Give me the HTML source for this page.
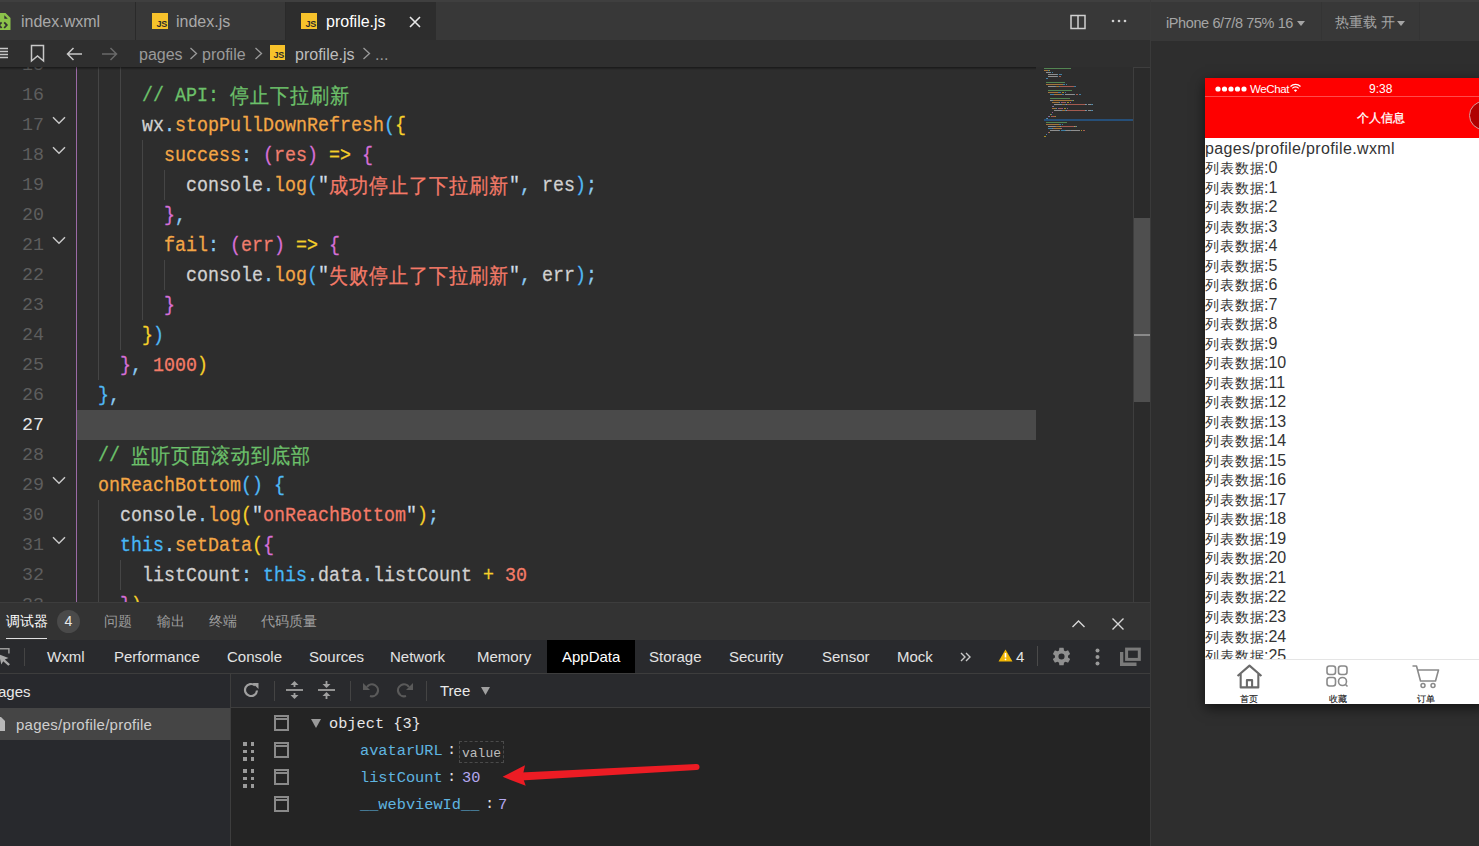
<!DOCTYPE html>
<html><head><meta charset="utf-8">
<style>
*{margin:0;padding:0;box-sizing:border-box}
html,body{width:1479px;height:846px;overflow:hidden;background:#2e2e2e;font-family:"Liberation Sans",sans-serif}
.a{position:absolute}
svg{position:absolute;overflow:visible}
/* editor tabs */
#tabbar{left:0;top:0;width:1150px;height:40px;background:#383838;border-top:2px solid #3f3f3f}
.tab{position:absolute;top:0;height:38px;white-space:nowrap}
.tab .t{position:absolute;top:10px;font-size:16px;line-height:20px;color:#a9a9a9}
.tabsep{position:absolute;top:0;width:1px;height:38px;background:#2a2a2a}
.js{position:absolute;width:15px;height:14px;background:#f7c22b}
.js i{position:absolute;right:1px;bottom:0px;font-style:normal;font-size:9px;line-height:9px;color:#2a2a2a;font-weight:bold;letter-spacing:-0.3px}
#crumbs{left:0;top:40px;width:1150px;height:27px;background:#2f2f2f;z-index:3}
#crumbs:after{content:"";position:absolute;left:0;top:27px;width:1036px;height:3px;background:linear-gradient(rgba(0,0,0,.45),rgba(0,0,0,0))}
.cr{position:absolute;top:5px;font-size:16px;line-height:20px;color:#9a9a9a;white-space:nowrap}
/* code */
#code{left:0;top:67px;width:1150px;height:536px;background:#2d2d2d;overflow:hidden}
.ln{position:absolute;left:0;width:44px;height:30px;line-height:32px;text-align:right;font-family:"Liberation Mono",monospace;font-size:18.33px;color:#5e5e5e}
.ln.cur{color:#e6e6e6}
.cl{position:absolute;height:30px;line-height:30px;white-space:pre;font-family:"Liberation Mono",monospace;font-size:18.33px;transform:translateY(1.5px) scaleY(1.1);-webkit-text-stroke:0.25px currentColor}
.cj{display:inline-block;width:20px;font-size:19px;text-align:left;line-height:30px;vertical-align:top;font-family:"Liberation Sans",sans-serif}
.ig{position:absolute;width:1px}

#curline{left:77px;top:343px;width:959px;height:30px;background:#4a4a4a}
#minimap{left:1036px;top:0;width:97px;height:536px}
#minimap i{position:absolute;height:1.5px;opacity:.6}
#vsb{left:1133px;top:0;width:17px;height:536px;background:#2b2b2b;border-left:1px solid #3e3e3e;border-top:1px solid #3e3e3e}
/* bottom panel */
#panel{left:0;top:602px;width:1150px;height:244px;background:#242424}
#phead{left:0;top:0;width:1150px;height:38px;background:#333333;border-top:1px solid #3d3d3d}
.ph{position:absolute;top:9px;font-size:14px;line-height:18px;color:#9d9d9d;white-space:nowrap}
#dtabs{left:0;top:38px;width:1150px;height:34px;background:#292a2d;border-bottom:1px solid #3d3d3d}
.dt{position:absolute;top:8px;font-size:15px;line-height:18px;color:#e3e3e3;white-space:nowrap}
#left{left:0;top:72px;width:231px;height:172px;background:#28292d;border-right:1px solid #3d3d3d}
#rtool{left:231px;top:72px;width:919px;height:34px;background:#292a2d;border-bottom:1px solid #3d3d3d}
.mono{font-family:"Liberation Mono",monospace}
.tr{position:absolute;font-family:"Liberation Mono",monospace;font-size:15.3px;line-height:18px;white-space:pre}
.sq{position:absolute;left:274px;width:15px;height:16px;border:2.5px solid #8a8a8a}
.sq:after{content:"";position:absolute;left:0;right:0;top:1px;height:2px;background:#8a8a8a}
.drag{position:absolute;left:243px;width:11px;height:18px}
.drag i{position:absolute;width:3.5px;height:3.5px;background:#9a9a9a}
/* simulator */
#sim{left:1150px;top:0;width:329px;height:846px;background:#2e2e2e;border-left:1px solid #3a3a3a}
#simbar{left:0;top:0;width:329px;height:41px;background:#383838;border-top:2px solid #3f3f3f}
.sb{position:absolute;top:12px;font-size:14.5px;line-height:18px;color:#a5a5a5;white-space:nowrap;letter-spacing:-0.4px}
.tri{position:absolute;width:0;height:0;border-left:4px solid transparent;border-right:4px solid transparent;border-top:5px solid #a5a5a5}
#phone{left:54px;top:78px;width:280px;height:626px;background:#fff;box-shadow:0 4px 12px rgba(0,0,0,.6);overflow:hidden}
#status{left:0;top:0;width:280px;height:19px;background:#fe0000;border-bottom:1px solid #ff4a4a}
#nav{left:0;top:19px;width:280px;height:41px;background:#fe0000}
.li{position:absolute;left:0;font-size:14px;line-height:19px;color:#333;white-space:nowrap;letter-spacing:1px}
.li b{font-weight:normal;font-size:16px;letter-spacing:0;margin-left:-1px}
#tabb{left:0;top:581px;width:280px;height:45px;background:#fff;border-top:1px solid #e5e5e5}
.tbt{position:absolute;top:33px;font-size:9px;-webkit-text-stroke:0.1px #111;line-height:12px;color:#111;white-space:nowrap}
</style></head><body>

<!-- ============ EDITOR TAB BAR ============ -->
<div id="tabbar" class="a">
  <div class="tab" style="left:0;width:135px">
    <svg style="left:-4.5px;top:10.5px" width="15" height="17" viewBox="0 0 15 17"><path d="M0 0H9.5L14.5 5V17H0z" fill="#8bc34a"/><path d="M8.3 2.2L11.8 5.7H8.3z" fill="#333"/><path d="M5.6 9.3L3 12.1L5.6 15M8.2 9.3L10.8 12.1L8.2 15" fill="none" stroke="#333" stroke-width="1.8"/></svg>
    <div class="t" style="left:21px">index.wxml</div>
  </div>
  <div class="tabsep" style="left:135px"></div>
  <div class="tab" style="left:136px;width:149px">
    <div class="js" style="left:16px;top:11px;width:16px;height:16px"><i>JS</i></div>
    <div class="t" style="left:40px">index.js</div>
  </div>
  <div class="tabsep" style="left:285px"></div>
  <div class="tab" style="left:286px;width:150px;background:#2d2d2d">
    <div class="js" style="left:15px;top:11px;width:16px;height:16px"><i>JS</i></div>
    <div class="t" style="left:40px;color:#ffffff">profile.js</div>
    <svg style="left:123px;top:14px" width="12" height="12" viewBox="0 0 12 12"><path d="M1 1L11 11M11 1L1 11" stroke="#e8e8e8" stroke-width="1.6"/></svg>
  </div>
  <!-- split + more -->
  <svg style="left:1070px;top:12px" width="16" height="16" viewBox="0 0 16 16"><rect x="1" y="1.5" width="14" height="13" fill="none" stroke="#cfcfcf" stroke-width="1.5"/><path d="M8 1.5v13" stroke="#cfcfcf" stroke-width="1.5"/></svg>
  <svg style="left:1111px;top:17px" width="16" height="4" viewBox="0 0 16 4"><circle cx="2" cy="2" r="1.3" fill="#cfcfcf"/><circle cx="8" cy="2" r="1.3" fill="#cfcfcf"/><circle cx="14" cy="2" r="1.3" fill="#cfcfcf"/></svg>
</div>

<!-- ============ BREADCRUMBS ============ -->
<div id="crumbs" class="a">
  <svg style="left:-3px;top:7px" width="12" height="12" viewBox="0 0 12 12"><path d="M0 1.5h11M0 4.5h11M0 7.5h11M0 10.5h11" stroke="#c8c8c8" stroke-width="1.3"/></svg>
  <svg style="left:30px;top:4px" width="15" height="19" viewBox="0 0 15 19"><path d="M1.5 1.5h12v15.5l-6-5-6 5z" fill="none" stroke="#c8c8c8" stroke-width="1.5"/></svg>
  <svg style="left:66px;top:7px" width="17" height="14" viewBox="0 0 17 14"><path d="M16 7H1.5M7.5 1L1.5 7l6 6" fill="none" stroke="#c8c8c8" stroke-width="1.5"/></svg>
  <svg style="left:101px;top:7px" width="17" height="14" viewBox="0 0 17 14"><path d="M1 7h14.5M9.5 1l6 6-6 6" fill="none" stroke="#6a6a6a" stroke-width="1.5"/></svg>
  <div class="cr" style="left:139px">pages</div>
  <svg style="left:189px;top:7px" width="9" height="13" viewBox="0 0 9 13"><path d="M1.5 1l6 5.5-6 5.5" fill="none" stroke="#9a9a9a" stroke-width="1.3"/></svg>
  <div class="cr" style="left:202px">profile</div>
  <svg style="left:254px;top:7px" width="9" height="13" viewBox="0 0 9 13"><path d="M1.5 1l6 5.5-6 5.5" fill="none" stroke="#9a9a9a" stroke-width="1.3"/></svg>
  <div class="js" style="left:270px;top:5px;width:15px;height:15px"><i>JS</i></div>
  <div class="cr" style="left:295px;color:#bdbdbd">profile.js</div>
  <svg style="left:362px;top:7px" width="9" height="13" viewBox="0 0 9 13"><path d="M1.5 1l6 5.5-6 5.5" fill="none" stroke="#9a9a9a" stroke-width="1.3"/></svg>
  <div class="cr" style="left:375px">...</div>
</div>

<!-- ============ CODE ============ -->
<div id="code" class="a">
  <div id="curline" class="a"></div>
<div class="ig" style="left:76px;top:-47px;height:630px;background:#9b6aa6"></div>
<div class="ig" style="left:98px;top:-47px;height:360px;background:#454545"></div>
<div class="ig" style="left:120px;top:-47px;height:330px;background:#454545"></div>
<div class="ig" style="left:142px;top:73px;height:180px;background:#454545"></div>
<div class="ig" style="left:164px;top:103px;height:30px;background:#454545"></div>
<div class="ig" style="left:164px;top:193px;height:30px;background:#454545"></div>
<div class="ig" style="left:98px;top:433px;height:150px;background:#454545"></div>
<div class="ig" style="left:120px;top:493px;height:30px;background:#454545"></div>
<div class="ln" style="top:-17px">15</div>
<div class="cl" style="top:-17px;left:120px"></div>
<div class="ln" style="top:13px">16</div>
<div class="cl" style="top:13px;left:142px"><span style="color:#6cc06a">// API: </span><span class="cj" style="color:#6cc06a">停</span><span class="cj" style="color:#6cc06a">止</span><span class="cj" style="color:#6cc06a">下</span><span class="cj" style="color:#6cc06a">拉</span><span class="cj" style="color:#6cc06a">刷</span><span class="cj" style="color:#6cc06a">新</span></div>
<div class="ln" style="top:43px">17</div>
<svg class="fold" style="left:52px;top:49px" width="14" height="9" viewBox="0 0 14 9"><path d="M1 1.2l6 6 6-6" fill="none" stroke="#c8c8c8" stroke-width="1.5"/></svg>
<div class="cl" style="top:43px;left:142px"><span style="color:#d1d1d1">wx</span><span style="color:#8ccbf2">.</span><span style="color:#f3a646">stopPullDownRefresh</span><span style="color:#4fb8f5">(</span><span style="color:#f5d02a">{</span></div>
<div class="ln" style="top:73px">18</div>
<svg class="fold" style="left:52px;top:79px" width="14" height="9" viewBox="0 0 14 9"><path d="M1 1.2l6 6 6-6" fill="none" stroke="#c8c8c8" stroke-width="1.5"/></svg>
<div class="cl" style="top:73px;left:164px"><span style="color:#f3a646">success</span><span style="color:#8ccbf2">:</span><span style="color:#d1d1d1"> </span><span style="color:#d66fd6">(</span><span style="color:#f07e6e">res</span><span style="color:#d66fd6">)</span><span style="color:#d1d1d1"> </span><span style="color:#f5d02a">=&gt;</span><span style="color:#d1d1d1"> </span><span style="color:#d66fd6">{</span></div>
<div class="ln" style="top:103px">19</div>
<div class="cl" style="top:103px;left:186px"><span style="color:#d1d1d1">console</span><span style="color:#8ccbf2">.</span><span style="color:#f3a646">log</span><span style="color:#4fb8f5">(</span><span style="color:#cfdbe6">&quot;</span><span class="cj" style="color:#f47a68">成</span><span class="cj" style="color:#f47a68">功</span><span class="cj" style="color:#f47a68">停</span><span class="cj" style="color:#f47a68">止</span><span class="cj" style="color:#f47a68">了</span><span class="cj" style="color:#f47a68">下</span><span class="cj" style="color:#f47a68">拉</span><span class="cj" style="color:#f47a68">刷</span><span class="cj" style="color:#f47a68">新</span><span style="color:#cfdbe6">&quot;</span><span style="color:#8ccbf2">, </span><span style="color:#d1d1d1">res</span><span style="color:#4fb8f5">)</span><span style="color:#8ccbf2">;</span></div>
<div class="ln" style="top:133px">20</div>
<div class="cl" style="top:133px;left:164px"><span style="color:#d66fd6">}</span><span style="color:#8ccbf2">,</span></div>
<div class="ln" style="top:163px">21</div>
<svg class="fold" style="left:52px;top:169px" width="14" height="9" viewBox="0 0 14 9"><path d="M1 1.2l6 6 6-6" fill="none" stroke="#c8c8c8" stroke-width="1.5"/></svg>
<div class="cl" style="top:163px;left:164px"><span style="color:#f3a646">fail</span><span style="color:#8ccbf2">:</span><span style="color:#d1d1d1"> </span><span style="color:#d66fd6">(</span><span style="color:#f07e6e">err</span><span style="color:#d66fd6">)</span><span style="color:#d1d1d1"> </span><span style="color:#f5d02a">=&gt;</span><span style="color:#d1d1d1"> </span><span style="color:#d66fd6">{</span></div>
<div class="ln" style="top:193px">22</div>
<div class="cl" style="top:193px;left:186px"><span style="color:#d1d1d1">console</span><span style="color:#8ccbf2">.</span><span style="color:#f3a646">log</span><span style="color:#4fb8f5">(</span><span style="color:#cfdbe6">&quot;</span><span class="cj" style="color:#f47a68">失</span><span class="cj" style="color:#f47a68">败</span><span class="cj" style="color:#f47a68">停</span><span class="cj" style="color:#f47a68">止</span><span class="cj" style="color:#f47a68">了</span><span class="cj" style="color:#f47a68">下</span><span class="cj" style="color:#f47a68">拉</span><span class="cj" style="color:#f47a68">刷</span><span class="cj" style="color:#f47a68">新</span><span style="color:#cfdbe6">&quot;</span><span style="color:#8ccbf2">, </span><span style="color:#d1d1d1">err</span><span style="color:#4fb8f5">)</span><span style="color:#8ccbf2">;</span></div>
<div class="ln" style="top:223px">23</div>
<div class="cl" style="top:223px;left:164px"><span style="color:#d66fd6">}</span></div>
<div class="ln" style="top:253px">24</div>
<div class="cl" style="top:253px;left:142px"><span style="color:#f5d02a">}</span><span style="color:#4fb8f5">)</span></div>
<div class="ln" style="top:283px">25</div>
<div class="cl" style="top:283px;left:120px"><span style="color:#d66fd6">}</span><span style="color:#8ccbf2">, </span><span style="color:#f47c68">1000</span><span style="color:#f5d02a">)</span></div>
<div class="ln" style="top:313px">26</div>
<div class="cl" style="top:313px;left:98px"><span style="color:#4fb8f5">}</span><span style="color:#8ccbf2">,</span></div>
<div class="ln cur" style="top:343px">27</div>
<div class="cl" style="top:343px;left:76px"></div>
<div class="ln" style="top:373px">28</div>
<div class="cl" style="top:373px;left:98px"><span style="color:#6cc06a">// </span><span class="cj" style="color:#6cc06a">监</span><span class="cj" style="color:#6cc06a">听</span><span class="cj" style="color:#6cc06a">页</span><span class="cj" style="color:#6cc06a">面</span><span class="cj" style="color:#6cc06a">滚</span><span class="cj" style="color:#6cc06a">动</span><span class="cj" style="color:#6cc06a">到</span><span class="cj" style="color:#6cc06a">底</span><span class="cj" style="color:#6cc06a">部</span></div>
<div class="ln" style="top:403px">29</div>
<svg class="fold" style="left:52px;top:409px" width="14" height="9" viewBox="0 0 14 9"><path d="M1 1.2l6 6 6-6" fill="none" stroke="#c8c8c8" stroke-width="1.5"/></svg>
<div class="cl" style="top:403px;left:98px"><span style="color:#f3a646">onReachBottom</span><span style="color:#4fb8f5">()</span><span style="color:#d1d1d1"> </span><span style="color:#4fb8f5">{</span></div>
<div class="ln" style="top:433px">30</div>
<div class="cl" style="top:433px;left:120px"><span style="color:#d1d1d1">console</span><span style="color:#8ccbf2">.</span><span style="color:#f3a646">log</span><span style="color:#f5d02a">(</span><span style="color:#cfdbe6">&quot;</span><span style="color:#f47a68">onReachBottom</span><span style="color:#cfdbe6">&quot;</span><span style="color:#f5d02a">)</span><span style="color:#8ccbf2">;</span></div>
<div class="ln" style="top:463px">31</div>
<svg class="fold" style="left:52px;top:469px" width="14" height="9" viewBox="0 0 14 9"><path d="M1 1.2l6 6 6-6" fill="none" stroke="#c8c8c8" stroke-width="1.5"/></svg>
<div class="cl" style="top:463px;left:120px"><span style="color:#47b6f5">this</span><span style="color:#8ccbf2">.</span><span style="color:#f3a646">setData</span><span style="color:#f5d02a">(</span><span style="color:#d66fd6">{</span></div>
<div class="ln" style="top:493px">32</div>
<div class="cl" style="top:493px;left:142px"><span style="color:#d1d1d1">listCount</span><span style="color:#8ccbf2">:</span><span style="color:#d1d1d1"> </span><span style="color:#47b6f5">this</span><span style="color:#8ccbf2">.</span><span style="color:#d1d1d1">data</span><span style="color:#8ccbf2">.</span><span style="color:#d1d1d1">listCount</span><span style="color:#d1d1d1"> </span><span style="color:#f5d02a">+</span><span style="color:#d1d1d1"> </span><span style="color:#f47c68">30</span></div>
<div class="ln" style="top:523px">33</div>
<div class="cl" style="top:523px;left:120px"><span style="color:#d66fd6">}</span><span style="color:#f5d02a">)</span></div>
  <div id="minimap" class="a"><div class="a" style="left:8px;top:52.0px;width:89px;height:2px;background:#264f78"></div><i style="left:8px;top:0.5px;width:27px;background:#6cc06a"></i><i style="left:8px;top:2.5px;width:4px;background:#f3a646"></i><i style="left:12px;top:2.5px;width:1px;background:#4fb8f5"></i><i style="left:13px;top:2.5px;width:1px;background:#f5d02a"></i><i style="left:10px;top:4.5px;width:4px;background:#d1d1d1"></i><i style="left:14px;top:4.5px;width:1px;background:#8ccbf2"></i><i style="left:16px;top:4.5px;width:1px;background:#4fb8f5"></i><i style="left:12px;top:6.5px;width:9px;background:#d1d1d1"></i><i style="left:21px;top:6.5px;width:1px;background:#8ccbf2"></i><i style="left:23px;top:6.5px;width:3px;background:#4fb8f5"></i><i style="left:12px;top:8.5px;width:9px;background:#d1d1d1"></i><i style="left:21px;top:8.5px;width:1px;background:#8ccbf2"></i><i style="left:23px;top:8.5px;width:2px;background:#f47c68"></i><i style="left:10px;top:10.5px;width:2px;background:#4fb8f5"></i><i style="left:10px;top:14.5px;width:19px;background:#6cc06a"></i><i style="left:10px;top:16.5px;width:17px;background:#f3a646"></i><i style="left:27px;top:16.5px;width:2px;background:#4fb8f5"></i><i style="left:30px;top:16.5px;width:1px;background:#4fb8f5"></i><i style="left:12px;top:18.5px;width:7px;background:#d1d1d1"></i><i style="left:19px;top:18.5px;width:1px;background:#8ccbf2"></i><i style="left:20px;top:18.5px;width:3px;background:#f3a646"></i><i style="left:23px;top:18.5px;width:1px;background:#4fb8f5"></i><i style="left:24px;top:18.5px;width:14px;background:#f47a68"></i><i style="left:38px;top:18.5px;width:2px;background:#4fb8f5"></i><i style="left:12px;top:22.5px;width:24px;background:#6cc06a"></i><i style="left:12px;top:24.5px;width:10px;background:#f3a646"></i><i style="left:22px;top:24.5px;width:3px;background:#4fb8f5"></i><i style="left:26px;top:24.5px;width:2px;background:#f5d02a"></i><i style="left:29px;top:24.5px;width:1px;background:#4fb8f5"></i><i style="left:14px;top:26.5px;width:4px;background:#47b6f5"></i><i style="left:18px;top:26.5px;width:8px;background:#f3a646"></i><i style="left:26px;top:26.5px;width:2px;background:#4fb8f5"></i><i style="left:29px;top:26.5px;width:9px;background:#d1d1d1"></i><i style="left:38px;top:26.5px;width:1px;background:#8ccbf2"></i><i style="left:40px;top:26.5px;width:2px;background:#f47c68"></i><i style="left:43px;top:26.5px;width:2px;background:#4fb8f5"></i><i style="left:14px;top:30.5px;width:20px;background:#6cc06a"></i><i style="left:14px;top:32.5px;width:2px;background:#d1d1d1"></i><i style="left:16px;top:32.5px;width:1px;background:#8ccbf2"></i><i style="left:17px;top:32.5px;width:19px;background:#f3a646"></i><i style="left:36px;top:32.5px;width:1px;background:#4fb8f5"></i><i style="left:37px;top:32.5px;width:1px;background:#f5d02a"></i><i style="left:16px;top:34.5px;width:7px;background:#f3a646"></i><i style="left:23px;top:34.5px;width:1px;background:#8ccbf2"></i><i style="left:25px;top:34.5px;width:1px;background:#d66fd6"></i><i style="left:26px;top:34.5px;width:3px;background:#f07e6e"></i><i style="left:29px;top:34.5px;width:1px;background:#d66fd6"></i><i style="left:31px;top:34.5px;width:2px;background:#f5d02a"></i><i style="left:34px;top:34.5px;width:1px;background:#d66fd6"></i><i style="left:18px;top:36.5px;width:7px;background:#d1d1d1"></i><i style="left:25px;top:36.5px;width:1px;background:#8ccbf2"></i><i style="left:26px;top:36.5px;width:3px;background:#f3a646"></i><i style="left:29px;top:36.5px;width:1px;background:#4fb8f5"></i><i style="left:30px;top:36.5px;width:1px;background:#cfdbe6"></i><i style="left:31px;top:36.5px;width:18px;background:#f47a68"></i><i style="left:49px;top:36.5px;width:1px;background:#cfdbe6"></i><i style="left:50px;top:36.5px;width:1px;background:#8ccbf2"></i><i style="left:52px;top:36.5px;width:3px;background:#d1d1d1"></i><i style="left:55px;top:36.5px;width:1px;background:#4fb8f5"></i><i style="left:56px;top:36.5px;width:1px;background:#8ccbf2"></i><i style="left:16px;top:38.5px;width:1px;background:#d66fd6"></i><i style="left:17px;top:38.5px;width:1px;background:#8ccbf2"></i><i style="left:16px;top:40.5px;width:4px;background:#f3a646"></i><i style="left:20px;top:40.5px;width:1px;background:#8ccbf2"></i><i style="left:22px;top:40.5px;width:1px;background:#d66fd6"></i><i style="left:23px;top:40.5px;width:3px;background:#f07e6e"></i><i style="left:26px;top:40.5px;width:1px;background:#d66fd6"></i><i style="left:28px;top:40.5px;width:2px;background:#f5d02a"></i><i style="left:31px;top:40.5px;width:1px;background:#d66fd6"></i><i style="left:18px;top:42.5px;width:7px;background:#d1d1d1"></i><i style="left:25px;top:42.5px;width:1px;background:#8ccbf2"></i><i style="left:26px;top:42.5px;width:3px;background:#f3a646"></i><i style="left:29px;top:42.5px;width:1px;background:#4fb8f5"></i><i style="left:30px;top:42.5px;width:1px;background:#cfdbe6"></i><i style="left:31px;top:42.5px;width:18px;background:#f47a68"></i><i style="left:49px;top:42.5px;width:1px;background:#cfdbe6"></i><i style="left:50px;top:42.5px;width:1px;background:#8ccbf2"></i><i style="left:52px;top:42.5px;width:3px;background:#d1d1d1"></i><i style="left:55px;top:42.5px;width:1px;background:#4fb8f5"></i><i style="left:56px;top:42.5px;width:1px;background:#8ccbf2"></i><i style="left:16px;top:44.5px;width:1px;background:#d66fd6"></i><i style="left:14px;top:46.5px;width:1px;background:#f5d02a"></i><i style="left:15px;top:46.5px;width:1px;background:#4fb8f5"></i><i style="left:12px;top:48.5px;width:1px;background:#d66fd6"></i><i style="left:13px;top:48.5px;width:1px;background:#8ccbf2"></i><i style="left:15px;top:48.5px;width:4px;background:#f47c68"></i><i style="left:19px;top:48.5px;width:1px;background:#f5d02a"></i><i style="left:10px;top:50.5px;width:1px;background:#4fb8f5"></i><i style="left:11px;top:50.5px;width:1px;background:#8ccbf2"></i><i style="left:10px;top:54.5px;width:21px;background:#6cc06a"></i><i style="left:10px;top:56.5px;width:13px;background:#f3a646"></i><i style="left:23px;top:56.5px;width:2px;background:#4fb8f5"></i><i style="left:26px;top:56.5px;width:1px;background:#4fb8f5"></i><i style="left:12px;top:58.5px;width:7px;background:#d1d1d1"></i><i style="left:19px;top:58.5px;width:1px;background:#8ccbf2"></i><i style="left:20px;top:58.5px;width:3px;background:#f3a646"></i><i style="left:23px;top:58.5px;width:1px;background:#f5d02a"></i><i style="left:24px;top:58.5px;width:1px;background:#cfdbe6"></i><i style="left:25px;top:58.5px;width:13px;background:#f47a68"></i><i style="left:38px;top:58.5px;width:1px;background:#cfdbe6"></i><i style="left:39px;top:58.5px;width:1px;background:#f5d02a"></i><i style="left:40px;top:58.5px;width:1px;background:#8ccbf2"></i><i style="left:12px;top:60.5px;width:4px;background:#47b6f5"></i><i style="left:16px;top:60.5px;width:1px;background:#8ccbf2"></i><i style="left:17px;top:60.5px;width:7px;background:#f3a646"></i><i style="left:24px;top:60.5px;width:1px;background:#f5d02a"></i><i style="left:25px;top:60.5px;width:1px;background:#d66fd6"></i><i style="left:14px;top:62.5px;width:9px;background:#d1d1d1"></i><i style="left:23px;top:62.5px;width:1px;background:#8ccbf2"></i><i style="left:25px;top:62.5px;width:4px;background:#47b6f5"></i><i style="left:29px;top:62.5px;width:1px;background:#8ccbf2"></i><i style="left:30px;top:62.5px;width:4px;background:#d1d1d1"></i><i style="left:34px;top:62.5px;width:1px;background:#8ccbf2"></i><i style="left:35px;top:62.5px;width:9px;background:#d1d1d1"></i><i style="left:45px;top:62.5px;width:1px;background:#f5d02a"></i><i style="left:47px;top:62.5px;width:2px;background:#f47c68"></i><i style="left:12px;top:64.5px;width:1px;background:#d66fd6"></i><i style="left:13px;top:64.5px;width:1px;background:#f5d02a"></i><i style="left:10px;top:66.5px;width:1px;background:#4fb8f5"></i><i style="left:8px;top:68.5px;width:2px;background:#f5d02a"></i></div>
  <div id="vsb" class="a">
    <div class="a" style="left:0;top:150px;width:16px;height:184px;background:#4f4f4f"></div>
    <div class="a" style="left:0;top:266px;width:16px;height:2px;background:#8a8a8a"></div>
  </div>
</div>

<!-- ============ BOTTOM PANEL ============ -->
<div id="panel" class="a">
  <div id="phead" class="a">
    <div class="ph" style="left:6px;color:#ffffff">调试器</div>
    <div class="a" style="left:6px;top:34.5px;width:41px;height:1.5px;background:#e0e0e0"></div>
    <div class="a" style="left:57px;top:7px;width:23px;height:23px;border-radius:50%;background:#4a4a4a;color:#e8e8e8;font-size:14px;line-height:23px;text-align:center">4</div>
    <div class="ph" style="left:104px">问题</div>
    <div class="ph" style="left:157px">输出</div>
    <div class="ph" style="left:209px">终端</div>
    <div class="ph" style="left:261px">代码质量</div>
    <svg style="left:1072px;top:17px" width="13" height="8" viewBox="0 0 13 8"><path d="M0.5 7l6-6 6 6" fill="none" stroke="#d8d8d8" stroke-width="1.4"/></svg>
    <svg style="left:1112px;top:15px" width="12" height="12" viewBox="0 0 12 12"><path d="M0.5 0.5l11 11M11.5 0.5l-11 11" stroke="#d8d8d8" stroke-width="1.4"/></svg>
  </div>
  <div id="dtabs" class="a">
    <svg style="left:-10px;top:8px" width="22" height="18" viewBox="0 0 22 18"><path d="M0 0.8H18.9V5.5" fill="none" stroke="#9a9a9a" stroke-width="1.5"/><path d="M9 6.5L18.5 10L14.8 11.6L20 16.2L18.3 17.8L13.2 13.2L11.3 16.5z" fill="#a8a8a8"/></svg>
    <div class="a" style="left:24px;top:8px;width:1px;height:18px;background:#444"></div>
    <div class="dt" style="left:47px">Wxml</div>
    <div class="dt" style="left:114px">Performance</div>
    <div class="dt" style="left:227px">Console</div>
    <div class="dt" style="left:309px">Sources</div>
    <div class="dt" style="left:390px">Network</div>
    <div class="dt" style="left:477px">Memory</div>
    <div class="a" style="left:547px;top:0;width:88px;height:33px;background:#000"></div>
    <div class="dt" style="left:562px;color:#fff">AppData</div>
    <div class="dt" style="left:649px">Storage</div>
    <div class="dt" style="left:729px">Security</div>
    <div class="dt" style="left:822px">Sensor</div>
    <div class="dt" style="left:897px">Mock</div>
    <svg style="left:960px;top:12px" width="12" height="10" viewBox="0 0 12 10"><path d="M1 1l4 4-4 4M6 1l4 4-4 4" fill="none" stroke="#c8c8c8" stroke-width="1.4"/></svg>
    <svg style="left:998px;top:9px" width="15" height="13" viewBox="0 0 15 13"><path d="M7.5 0.5L14.5 12.5H0.5z" fill="#f2b705"/><path d="M7.5 4v4.5" stroke="#fff" stroke-width="1.6"/><circle cx="7.5" cy="10.3" r="0.9" fill="#fff"/></svg>
    <div class="dt" style="left:1016px">4</div>
    <div class="a" style="left:1037px;top:6px;width:1px;height:20px;background:#4a4a4a"></div>
    <svg style="left:1051px;top:6px" width="21" height="21" viewBox="0 0 24 24"><path fill="#8f8f8f" d="M19.4 13c.04-.33.06-.66.06-1s-.02-.67-.06-1l2.1-1.65c.19-.15.24-.42.12-.64l-2-3.46c-.12-.22-.39-.3-.61-.22l-2.49 1c-.52-.4-1.08-.73-1.69-.98l-.38-2.65A.49.49 0 0 0 14 2h-4c-.25 0-.46.18-.49.42l-.38 2.65c-.61.25-1.17.59-1.69.98l-2.49-1c-.23-.09-.49 0-.61.22l-2 3.46c-.13.22-.07.49.12.64L4.57 11c-.04.33-.07.67-.07 1s.03.67.07 1l-2.11 1.65c-.19.15-.24.42-.12.64l2 3.46c.12.22.39.3.61.22l2.49-1c.52.4 1.08.73 1.69.98l.38 2.65c.03.24.24.42.49.42h4c.25 0 .46-.18.49-.42l.38-2.65c.61-.25 1.17-.59 1.69-.98l2.49 1c.23.09.49 0 .61-.22l2-3.46c.12-.22.07-.49-.12-.64L19.4 13zM12 15.5A3.5 3.5 0 1 1 12 8.5a3.5 3.5 0 0 1 0 7z"/></svg>
    <svg style="left:1095px;top:8px" width="5" height="18" viewBox="0 0 5 18"><circle cx="2.5" cy="2.5" r="2" fill="#9a9a9a"/><circle cx="2.5" cy="9" r="2" fill="#9a9a9a"/><circle cx="2.5" cy="15.5" r="2" fill="#9a9a9a"/></svg>
    <svg style="left:1119px;top:7px" width="23" height="20" viewBox="0 0 23 20"><rect x="7.6" y="2.1" width="12.7" height="10.3" fill="none" stroke="#7a7a7a" stroke-width="3"/><path d="M1 5h3.3v10.5h13.2V19H1z" fill="#7a7a7a"/></svg>
  </div>
  <div id="left" class="a">
    <div class="a" style="left:-2px;top:9px;font-size:15px;line-height:18px;color:#e8e8e8">ages</div>
    <div class="a" style="left:0;top:34px;width:230px;height:32px;background:#454545"></div>
    <svg style="left:-6px;top:43px" width="11" height="14" viewBox="0 0 11 14"><path d="M0 0h7l4 4v10H0z" fill="#b8b8b8"/></svg>
    <div class="a" style="left:16px;top:41.5px;font-size:15px;line-height:18px;color:#cfcfcf;letter-spacing:0.25px">pages/profile/profile</div>
  </div>
  <div id="rtool" class="a">
    <svg style="left:12px;top:7.5px" width="17" height="16" viewBox="0 0 17 16"><path d="M14 8.5A6 6 0 1 1 12 3.5" fill="none" stroke="#a0a0a0" stroke-width="2.2"/><path d="M9.5 1h6v6z" fill="#a0a0a0"/></svg>
    <div class="a" style="left:43px;top:7px;width:1px;height:20px;background:#444"></div>
    <svg style="left:55px;top:7px" width="17" height="18" viewBox="0 0 17 18"><path d="M0 9h17" stroke="#a0a0a0" stroke-width="1.8"/><path d="M8.5 0l4 4h-8zM8.5 18l4-4h-8z" fill="#a0a0a0"/><path d="M8.5 3v3M8.5 12v3" stroke="#a0a0a0" stroke-width="1.8"/></svg>
    <svg style="left:87px;top:7px" width="17" height="18" viewBox="0 0 17 18"><path d="M0 9h17" stroke="#a0a0a0" stroke-width="1.8"/><path d="M8.5 7l4-4h-8zM8.5 11l4 4h-8z" fill="#a0a0a0"/><path d="M8.5 0v3M8.5 15v3" stroke="#a0a0a0" stroke-width="1.8"/></svg>
    <div class="a" style="left:119px;top:7px;width:1px;height:20px;background:#444"></div>
    <svg style="left:132px;top:7px" width="17" height="16" viewBox="0 0 17 16"><path d="M4 6A6 6 0 1 1 7 15" fill="none" stroke="#5a5a5a" stroke-width="2.2"/><path d="M0 2v7h7z" fill="#5a5a5a"/></svg>
    <svg style="left:165px;top:7px" width="17" height="16" viewBox="0 0 17 16"><path d="M13 6A6 6 0 1 0 10 15" fill="none" stroke="#5a5a5a" stroke-width="2.2"/><path d="M17 2v7h-7z" fill="#5a5a5a"/></svg>
    <div class="a" style="left:195px;top:7px;width:1px;height:20px;background:#444"></div>
    <div class="a" style="left:209px;top:8px;font-size:15px;line-height:18px;color:#e8e8e8">Tree</div>
    <svg style="left:250px;top:13px" width="9" height="8" viewBox="0 0 9 8"><path d="M0 0h9L4.5 8z" fill="#a0a0a0"/></svg>
  </div>
  <!-- tree -->
  <div class="sq" style="top:113px"></div>
  <svg style="left:311px;top:117px" width="10" height="9" viewBox="0 0 10 9"><path d="M0 0h10L5 9z" fill="#9a9a9a"/></svg>
  <div class="tr" style="left:329px;top:113px;color:#e6e6e6">object {3}</div>
  <div class="drag" style="top:140px"><i style="left:0;top:0"></i><i style="left:7.5px;top:0"></i><i style="left:0;top:7.5px"></i><i style="left:7.5px;top:7.5px"></i><i style="left:0;top:15px"></i><i style="left:7.5px;top:15px"></i></div>
  <div class="sq" style="top:140px"></div>
  <div class="tr" style="left:360px;top:140px;color:#5fb4e0">avatarURL</div>
  <div class="tr" style="left:447px;top:139px;color:#e0e0e0">:</div>
  <div class="a" style="left:459px;top:139px;width:45px;height:22px;border:1px dashed #4a4a4a"></div>
  <div class="tr" style="left:462px;top:143px;font-size:13px;color:#bdbdbd">value</div>
  <div class="drag" style="top:167px"><i style="left:0;top:0"></i><i style="left:7.5px;top:0"></i><i style="left:0;top:7.5px"></i><i style="left:7.5px;top:7.5px"></i><i style="left:0;top:15px"></i><i style="left:7.5px;top:15px"></i></div>
  <div class="sq" style="top:167px"></div>
  <div class="tr" style="left:360px;top:167px;color:#5fb4e0">listCount</div>
  <div class="tr" style="left:447px;top:166px;color:#e0e0e0">:</div>
  <div class="tr" style="left:462px;top:167px;color:#b4a8f0">30</div>
  <div class="sq" style="top:194px"></div>
  <div class="tr" style="left:360px;top:194px;color:#5fb4e0">__webviewId__</div>
  <div class="tr" style="left:485px;top:193px;color:#e0e0e0">:</div>
  <div class="tr" style="left:498px;top:194px;color:#b4a8f0">7</div>
  <!-- red arrow -->
  <svg style="left:0;top:0" width="1150" height="244" viewBox="0 0 1150 244"><path d="M521 170.6L696.5 162.1L696.5 168.1L521 178.6z" fill="#ec1c24"/><circle cx="696.5" cy="165.1" r="3" fill="#ec1c24"/><path d="M502.6 174.8L525 163.3L522.5 174.5L525.7 183.8z" fill="#ec1c24"/></svg>
</div>

<!-- ============ SIMULATOR ============ -->
<div id="sim" class="a">
  <div id="simbar" class="a">
    <div class="sb" style="left:15px">iPhone 6/7/8 75% 16</div>
    <div class="tri" style="left:146px;top:19px"></div>
    <div class="a" style="left:170px;top:0;width:1px;height:38px;background:#343434"></div>
    <div class="sb" style="left:184px;font-size:13.5px;letter-spacing:0">热重载 开</div>
    <div class="tri" style="left:246px;top:19px"></div>
    <div class="a" style="left:268px;top:0;width:1px;height:38px;background:#343434"></div>
  </div>
  <div id="phone" class="a">
    <div id="status" class="a">
      <svg style="left:10px;top:8px" width="32" height="6" viewBox="0 0 32 6"><circle cx="3" cy="3" r="2.6" fill="#fff"/><circle cx="9.5" cy="3" r="2.6" fill="#fff"/><circle cx="16" cy="3" r="2.6" fill="#fff"/><circle cx="22.5" cy="3" r="2.6" fill="#fff"/><circle cx="29" cy="3" r="2.6" fill="#fff"/></svg>
      <div class="a" style="left:45px;top:3.5px;font-size:11.5px;line-height:14px;color:#fff;letter-spacing:-0.4px">WeChat</div>
      <svg style="left:85px;top:5px" width="11" height="9" viewBox="0 0 11 9"><path d="M0.5 3.5a7 7 0 0 1 10 0M2.3 5.3a4.5 4.5 0 0 1 6.4 0" fill="none" stroke="#fff" stroke-width="1.2"/><path d="M5.5 9l-1.6-1.8a2.3 2.3 0 0 1 3.2 0z" fill="#fff"/></svg>
      <div class="a" style="left:164px;top:3.5px;font-size:12px;line-height:14px;color:#fff">9:38</div>
    </div>
    <div id="nav" class="a">
      <div class="a" style="left:152px;top:13px;font-size:12px;line-height:16px;color:#fff;-webkit-text-stroke:0.3px #fff">个人信息</div>
      <div class="a" style="left:264px;top:3.5px;width:40px;height:29px;border-radius:14.5px;background:#b00000;border:1px solid #d99"></div>
    </div>
    <div class="a" style="left:0;top:62px;font-size:16px;line-height:18px;color:#333;white-space:nowrap;letter-spacing:0.36px">pages/profile/profile.wxml</div>
<div class="li" style="top:80.0px">列表数据<b>:0</b></div>
<div class="li" style="top:99.5px">列表数据<b>:1</b></div>
<div class="li" style="top:119.0px">列表数据<b>:2</b></div>
<div class="li" style="top:138.6px">列表数据<b>:3</b></div>
<div class="li" style="top:158.1px">列表数据<b>:4</b></div>
<div class="li" style="top:177.6px">列表数据<b>:5</b></div>
<div class="li" style="top:197.1px">列表数据<b>:6</b></div>
<div class="li" style="top:216.6px">列表数据<b>:7</b></div>
<div class="li" style="top:236.2px">列表数据<b>:8</b></div>
<div class="li" style="top:255.7px">列表数据<b>:9</b></div>
<div class="li" style="top:275.2px">列表数据<b>:10</b></div>
<div class="li" style="top:294.7px">列表数据<b>:11</b></div>
<div class="li" style="top:314.2px">列表数据<b>:12</b></div>
<div class="li" style="top:333.8px">列表数据<b>:13</b></div>
<div class="li" style="top:353.3px">列表数据<b>:14</b></div>
<div class="li" style="top:372.8px">列表数据<b>:15</b></div>
<div class="li" style="top:392.3px">列表数据<b>:16</b></div>
<div class="li" style="top:411.8px">列表数据<b>:17</b></div>
<div class="li" style="top:431.4px">列表数据<b>:18</b></div>
<div class="li" style="top:450.9px">列表数据<b>:19</b></div>
<div class="li" style="top:470.4px">列表数据<b>:20</b></div>
<div class="li" style="top:489.9px">列表数据<b>:21</b></div>
<div class="li" style="top:509.4px">列表数据<b>:22</b></div>
<div class="li" style="top:529.0px">列表数据<b>:23</b></div>
<div class="li" style="top:548.5px">列表数据<b>:24</b></div>
<div class="li" style="top:568.0px">列表数据<b>:25</b></div>
    <div id="tabb" class="a">
      <svg style="left:31px;top:4px" width="27" height="25" viewBox="0 0 26 24"><path d="M1.5 11.5L13 1.5l11.5 10M4.5 9v13.5h17V9M10.5 22.5v-7h5v7" fill="none" stroke="#6a6a6a" stroke-width="2" stroke-linejoin="round"/></svg>
      <div class="tbt" style="left:35px">首页</div>
      <svg style="left:121px;top:5px" width="22" height="22" viewBox="0 0 22 22"><rect x="1" y="1" width="8.5" height="8.5" rx="2.5" fill="none" stroke="#8a8a8a" stroke-width="1.6"/><rect x="12.5" y="1" width="8.5" height="8.5" rx="2.5" fill="none" stroke="#8a8a8a" stroke-width="1.6"/><rect x="1" y="12.5" width="8.5" height="8.5" rx="2.5" fill="none" stroke="#8a8a8a" stroke-width="1.6"/><circle cx="16.5" cy="16.5" r="4" fill="none" stroke="#8a8a8a" stroke-width="1.6"/><path d="M19.5 19.5l2 2" stroke="#8a8a8a" stroke-width="1.6"/></svg>
      <div class="tbt" style="left:124px">收藏</div>
      <svg style="left:207px;top:5px" width="27" height="24" viewBox="0 0 27 24"><path d="M0.5 1h4l4 15h15l3-11H5.5" fill="none" stroke="#8a8a8a" stroke-width="1.6" stroke-linejoin="round"/><circle cx="11" cy="20.5" r="2" fill="none" stroke="#8a8a8a" stroke-width="1.5"/><circle cx="21" cy="20.5" r="2" fill="none" stroke="#8a8a8a" stroke-width="1.5"/></svg>
      <div class="tbt" style="left:212px">订单</div>
    </div>
  </div>
</div>
</body></html>
